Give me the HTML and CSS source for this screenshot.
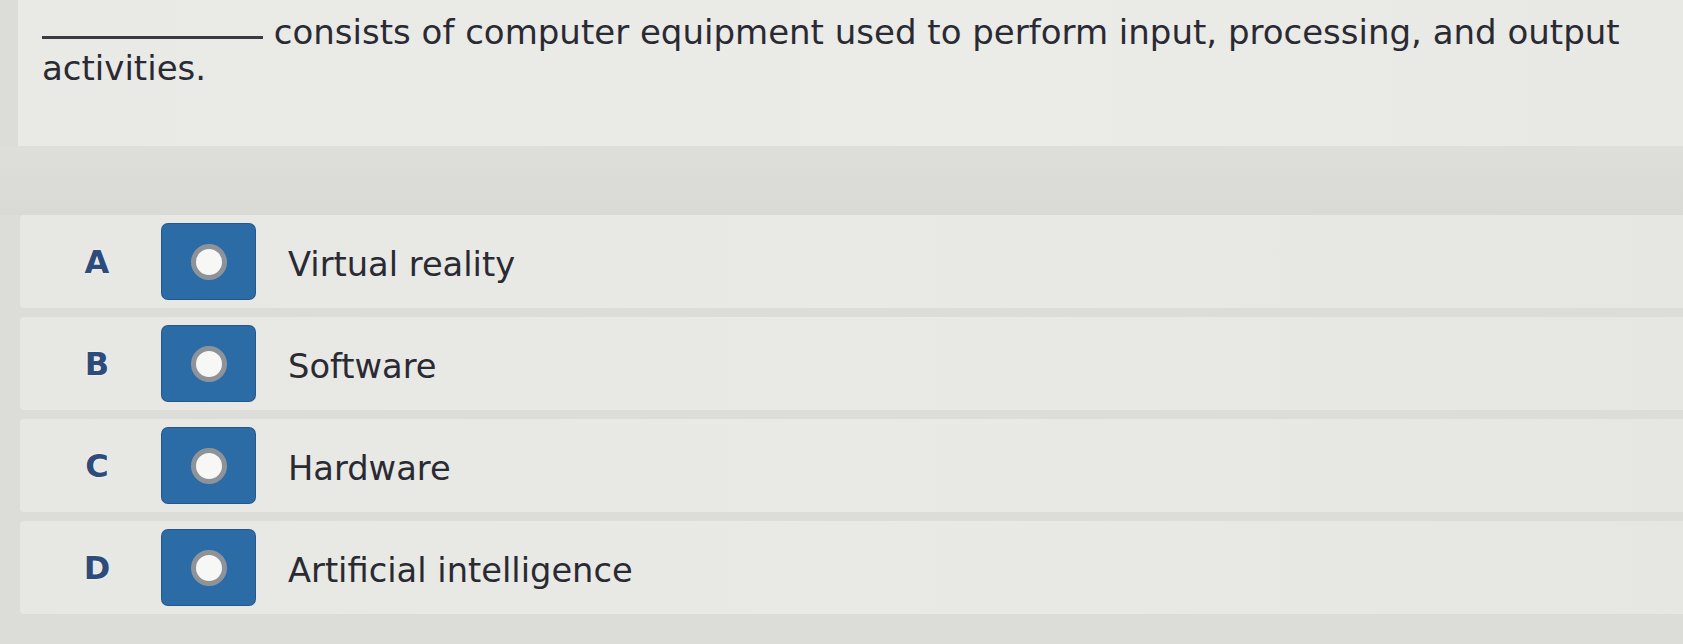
FILE: index.html
```html
<!DOCTYPE html>
<html lang="en">
<head>
<meta charset="utf-8">
<title>Question</title>
<link rel="stylesheet" href="styles.css">
</head>
<body>
<div class="page">
  <div class="question">
    <span class="blank"></span> consists of computer equipment used to perform input, processing, and output activities.
  </div>
  <div class="band"></div>
  <div class="options">
    <div class="option">
      <span class="letter">A</span>
      <span class="radio"><span class="dot"></span></span>
      <span class="label">Virtual reality</span>
    </div>
    <div class="option">
      <span class="letter">B</span>
      <span class="radio"><span class="dot"></span></span>
      <span class="label">Software</span>
    </div>
    <div class="option">
      <span class="letter">C</span>
      <span class="radio"><span class="dot"></span></span>
      <span class="label">Hardware</span>
    </div>
    <div class="option">
      <span class="letter">D</span>
      <span class="radio"><span class="dot"></span></span>
      <span class="label">Artificial intelligence</span>
    </div>
  </div>
</div>
</body>
</html>
```
FILE: styles.css
```css
html, body {
  margin: 0;
  padding: 0;
}
body {
  width: 1683px;
  height: 644px;
  overflow: hidden;
  background: #dcdcd8;
  font-family: "DejaVu Sans", Verdana, sans-serif;
  color: #2a2a33;
}
.page {
  display: flex;
  flex-direction: column;
}
.question {
  margin-left: 18px;
  height: 146px;
  box-sizing: border-box;
  padding: 14px 20px 0 24px;
  background: linear-gradient(90deg, #e9e9e6 0%, #ebebe8 60%, #e8e8e5 100%);
  font-size: 34px;
  line-height: 36px;
}
.blank {
  display: inline-block;
  width: 221px;
  height: 20px;
  border-bottom: 3px solid #3a3a44;
  vertical-align: 5px;
}
.band {
  height: 69px;
  background: linear-gradient(180deg, #dededa 0%, #d9d9d5 100%);
}
.options {
  margin-left: 20px;
  display: flex;
  flex-direction: column;
  gap: 9px;
}
.option {
  height: 93px;
  display: flex;
  align-items: center;
  background: linear-gradient(90deg, #e7e7e3 0%, #e9e9e6 50%, #e6e6e2 100%);
  border-radius: 4px 0 0 4px;
}
.letter {
  width: 142px;
  box-sizing: border-box;
  padding-left: 12px;
  text-align: center;
  font-weight: bold;
  font-size: 32px;
  color: #2d4b7b;
  text-shadow: 0 0 2px #ffffff;
}
.radio {
  width: 93px;
  height: 75px;
  border-radius: 6px;
  background: #2b6ba6;
  box-shadow: 0 0 0 1px #27578a;
  display: flex;
  align-items: center;
  justify-content: center;
}
.dot {
  width: 26px;
  height: 26px;
  border-radius: 50%;
  background: #f7f7f5;
  border: 5px solid #8e939a;
}
.label {
  margin-left: 33px;
  font-size: 33.7px;
  line-height: 40px;
  padding-top: 6px;
}
```
